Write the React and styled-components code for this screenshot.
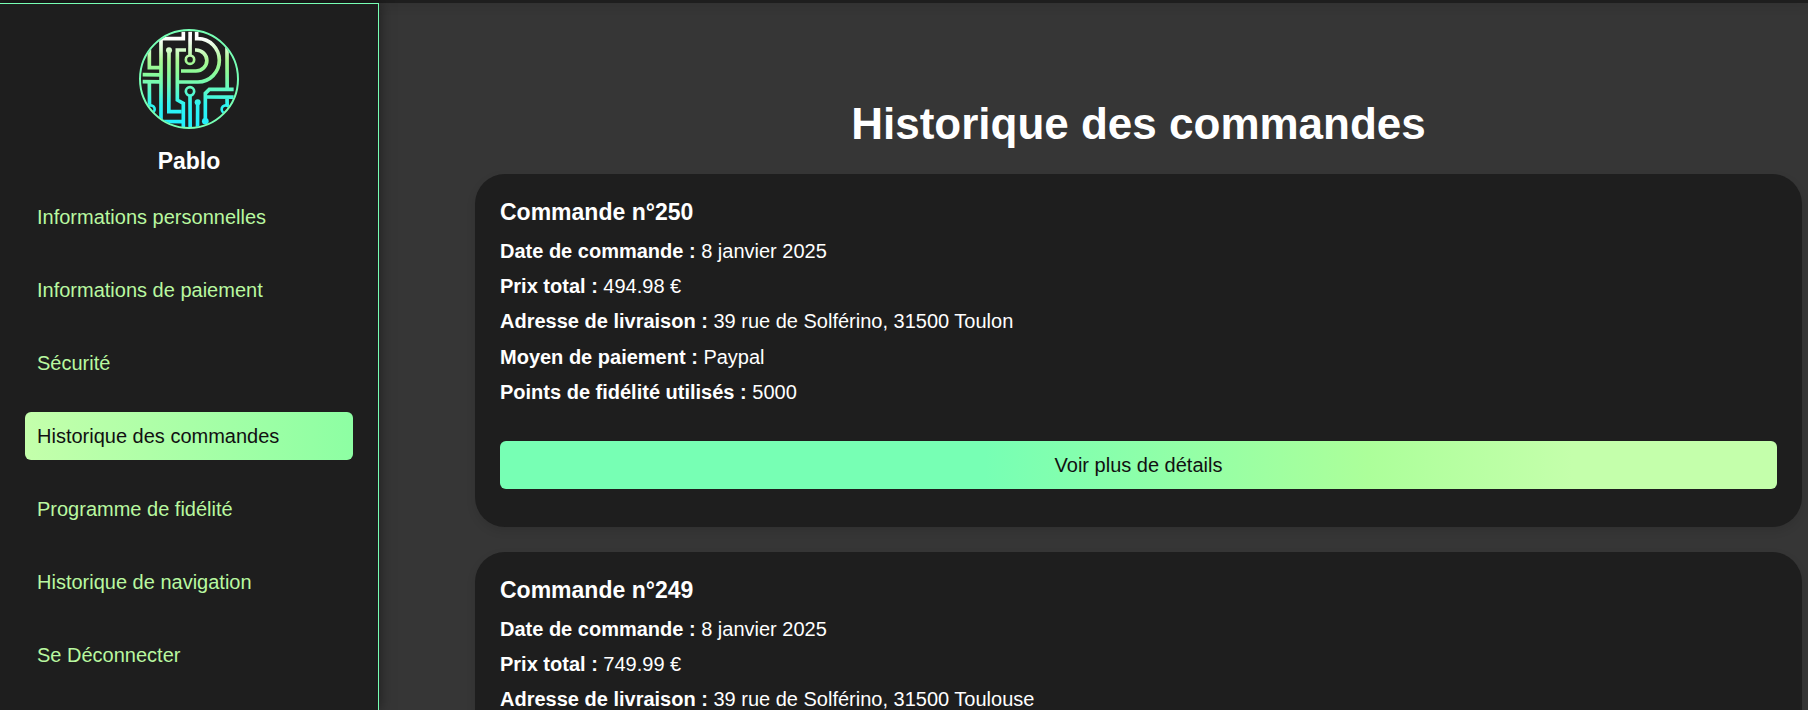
import React from "react";
import styled, { createGlobalStyle, css } from "styled-components";

const GlobalStyle = createGlobalStyle`
  *, *::before, *::after { box-sizing: border-box; }
  body {
    margin: 0;
    background: #363636;
    color: #ffffff;
    font-family: "Liberation Sans", Arial, sans-serif;
    font-size: 20px;
    line-height: 24px;
  }
  html, body, #root { height: 100%; }
  body { overflow: hidden; }
`;

const Page = styled.div`
  display: flex;
  flex-direction: column;
  height: 100vh;
`;

const TopBar = styled.header`
  flex: none;
  height: 3px;
  background: #1e1e1e;
  box-shadow: 0 0 12px rgba(0, 0, 0, 0.3);
`;

const Body = styled.div`
  display: flex;
  flex: 1;
  min-height: 0;
`;

const Sidebar = styled.aside`
  position: relative;
  flex: none;
  width: 379px;
  padding: 25px;
  display: flex;
  flex-direction: column;
  align-items: center;
  background: #1e1e1e;
  border: solid #77ffb4;
  border-width: 1px 1px 0 0;
  box-shadow: 0 0 13px rgba(0, 0, 0, 0.5);
`;

const Avatar = styled.svg`
  display: block;
  width: 100px;
  height: 100px;
`;

const UserName = styled.h2`
  margin: 17px 0;
  font-size: 23px;
  line-height: 30px;
`;

const Menu = styled.nav`
  align-self: stretch;
  display: flex;
  flex-direction: column;
  gap: 25px;
`;

const MenuLink = styled.a`
  padding: 12px;
  border-radius: 6px;
  color: #b9f8a0;
  text-decoration: none;
  ${(p) =>
    p.$active &&
    css`
      color: #111111;
      background: linear-gradient(to right, #c4ffab, #8dffa3);
    `}
`;

const Main = styled.main`
  flex: 1;
  min-width: 0;
  overflow: hidden;
  padding: 95px 6px 0 96px;
`;

const Title = styled.h1`
  margin: 0 0 24px;
  font-size: 44px;
  line-height: 52px;
  text-align: center;
`;

const Orders = styled.div`
  display: flex;
  flex-direction: column;
  gap: 25px;
`;

const OrderCard = styled.article`
  padding: 25px 25px 38px;
  border-radius: 30px;
  background: #1e1e1e;
  box-shadow: 0 4px 10px rgba(0, 0, 0, 0.1);
`;

const OrderTitle = styled.h3`
  margin: 0 0 7px;
  font-size: 23px;
  line-height: 27px;
`;

const Details = styled.div`
  display: grid;
  grid-auto-rows: 1fr;
  align-items: center;
  height: 177px;
`;

const Detail = styled.p`
  margin: 0;
`;

const DetailsButton = styled.button`
  display: block;
  width: 100%;
  margin-top: 31px;
  padding: 12px;
  border: 0;
  border-radius: 6px;
  color: #111111;
  font: inherit;
  cursor: pointer;
  background: linear-gradient(to right, #77ffb4 38%, #acff9a 68%, #c4ffab 84%);
`;

const menu = [
  "Informations personnelles",
  "Informations de paiement",
  "Sécurité",
  "Historique des commandes",
  "Programme de fidélité",
  "Historique de navigation",
  "Se Déconnecter",
];

const orders = [
  {
    id: 250,
    details: [
      ["Date de commande", "8 janvier 2025"],
      ["Prix total", "494.98 €"],
      ["Adresse de livraison", "39 rue de Solférino, 31500 Toulon"],
      ["Moyen de paiement", "Paypal"],
      ["Points de fidélité utilisés", "5000"],
    ],
  },
  {
    id: 249,
    details: [
      ["Date de commande", "8 janvier 2025"],
      ["Prix total", "749.99 €"],
      ["Adresse de livraison", "39 rue de Solférino, 31500 Toulouse"],
      ["Moyen de paiement", "Paypal"],
      ["Points de fidélité utilisés", "0"],
    ],
  },
];

function Logo() {
  return (
    <Avatar viewBox="27 27 300 300" role="img" aria-label="Photo de profil">
      <defs>
        <linearGradient id="circuit" gradientUnits="userSpaceOnUse" x1="0" y1="35" x2="0" y2="325">
          <stop offset="0.07" stopColor="#ffffff" />
          <stop offset="0.3" stopColor="#a9f894" />
          <stop offset="0.42" stopColor="#8dfb98" />
          <stop offset="0.54" stopColor="#72fbb4" />
          <stop offset="0.75" stopColor="#2ff4f0" />
          <stop offset="1" stopColor="#20eeff" />
        </linearGradient>
        <clipPath id="disc">
          <circle cx="177" cy="177" r="145" />
        </clipPath>
      </defs>
      <g clipPath="url(#disc)">
        <g fill="none" stroke="url(#circuit)" strokeWidth="11">
          <path d="M93 330 V56 H160 V35" />
          <path d="M180.5 35 L180 106" />
          <path d="M200 35 V56 H204 A64 65 0 0 1 204 186 H142" />
          <path d="M168 90 H142 V240 L160 250 V330" />
          <path d="M195 90 H198 A32 31 0 0 1 198 153 H153" />
          <path d="M117 90 L116.500 275 H155" />
          <path d="M98 304.500 L160 305" />
          <path d="M58 80 V143 H93" />
          <path d="M38 164 L93 164.500 M38 185 L93 185.500" />
          <path d="M58 185 L58.500 254 M180 227 L180.500 330 M203 247 L202.500 330" />
          <path d="M311 208 H238 L226 220 V304" />
          <path d="M226 231 L311 231.500 M291 80 L291.500 208 M291 231 L291.500 255" />
        </g>
        <g fill="none" stroke="url(#circuit)" strokeWidth="8">
          <circle cx="180" cy="119" r="12.500" />
          <circle cx="180" cy="214" r="12.500" />
          <circle cx="62" cy="268" r="12" />
          <circle cx="287" cy="268" r="12" />
        </g>
        <g fill="url(#circuit)">
          <circle cx="117" cy="91" r="9" />
          <circle cx="203" cy="247" r="9" />
          <circle cx="226" cy="304" r="10" />
        </g>
      </g>
      <circle cx="177" cy="177" r="147" fill="none" stroke="#77ffb4" strokeWidth="6" />
    </Avatar>
  );
}

export default function App() {
  return (
    <Page>
      <GlobalStyle />
      <TopBar />
      <Body>
        <Sidebar>
          <Logo />
          <UserName>Pablo</UserName>
          <Menu>
            {menu.map((label) => {
              const active = label === "Historique des commandes";
              return (
                <MenuLink key={label} href="#" $active={active} aria-current={active ? "page" : undefined}>
                  {label}
                </MenuLink>
              );
            })}
          </Menu>
        </Sidebar>
        <Main>
          <Title>Historique des commandes</Title>
          <Orders>
            {orders.map((order) => (
              <OrderCard key={order.id}>
                <OrderTitle>Commande n°{order.id}</OrderTitle>
                <Details>
                  {order.details.map(([label, value]) => (
                    <Detail key={label}>
                      <strong>{label} :</strong> {value}
                    </Detail>
                  ))}
                </Details>
                <DetailsButton type="button">Voir plus de détails</DetailsButton>
              </OrderCard>
            ))}
          </Orders>
        </Main>
      </Body>
    </Page>
  );
}
